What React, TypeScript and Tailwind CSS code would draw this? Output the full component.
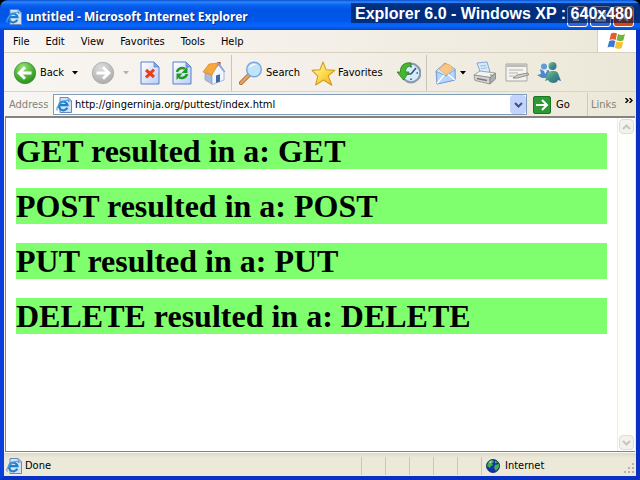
import React from "react";

const ui = "font-['DejaVu_Sans_Condensed','Liberation_Sans',Arial,sans-serif]";

function PageIcon({ size }: { size: number }) {
  return (
    <svg width={size} height={size} viewBox="0 0 16 16" className="shrink-0" aria-hidden="true">
      <path d="M4 .5h8L15.500 4v11.500H4z" fill="#d3e1f7" stroke="#6c87b8" />
      <path d="M12 .5V4h3.500z" fill="#a9c0ea" stroke="#6c87b8" strokeWidth=".6" />
      <path d="M11.200 10.800A4.300 4.300 0 1 1 11.500 8.200H4" fill="none" stroke="#1c7fc8" strokeWidth="2.200" />
      <path d="M1.500 13.500C-.5 12 2.500 6.500 8 4c3.500-1.500 5-.8 4.500 1" fill="none" stroke="#4ba3e2" strokeWidth="1.100" />
    </svg>
  );
}

function ArrowBall({ back }: { back?: boolean }) {
  return (
    <svg width="24" height="24" viewBox="0 0 24 24" className="shrink-0" aria-hidden="true">
      <defs>
        <radialGradient id={back ? "ballG" : "ballN"} cx=".4" cy=".25" r=".8">
          <stop offset="0" stopColor={back ? "#9be27c" : "#dcdcdc"} />
          <stop offset=".55" stopColor={back ? "#4fb437" : "#c2c2c2"} />
          <stop offset="1" stopColor={back ? "#238a18" : "#a8a8a8"} />
        </radialGradient>
      </defs>
      <circle cx="12" cy="12" r="10.700" fill={back ? "url(#ballG)" : "url(#ballN)"} stroke={back ? "#3f8f38" : "#aaa"} strokeWidth=".8" />
      {back ? (
        <path d="M18.500 12H7M12 6.200L6.200 12l5.800 5.800" fill="none" stroke="#fff" strokeWidth="3" />
      ) : (
        <path d="M5.500 12H17M12 6.200l5.800 5.800-5.800 5.800" fill="none" stroke="#fff" strokeWidth="3" />
      )}
    </svg>
  );
}

function Caret({ color }: { color: string }) {
  return (
    <svg width="6" height="4" viewBox="0 0 6 4" className="shrink-0" aria-hidden="true">
      <path d="M0 0h6L3 3.500z" fill={color} />
    </svg>
  );
}

function Sheet({ children }: { children: React.ReactNode }) {
  return (
    <svg width="20" height="24" viewBox="0 0 20 24" aria-hidden="true">
      <defs>
        <linearGradient id="sheet" x1="0" y1="0" x2="1" y2="1">
          <stop offset="0" stopColor="#fff" />
          <stop offset="1" stopColor="#b9cdf7" />
        </linearGradient>
      </defs>
      <path d="M1 1h13l5 5v17H1z" fill="url(#sheet)" stroke="#5b7fc4" />
      <path d="M14 1v5h5z" fill="#86a7e6" stroke="#5b7fc4" strokeWidth=".7" />
      {children}
    </svg>
  );
}

function HomeIcon() {
  return (
    <svg width="24" height="24" viewBox="0 0 24 24" aria-hidden="true">
      <path d="M15.500 1h3v7h-3z" fill="#c8321e" />
      <path d="M3 12l7 2v9l-7-4z" fill="#a9bce0" stroke="#8493b4" strokeWidth=".6" />
      <path d="M10 12l6.500-8L22 11v8l-12 4.500z" fill="#f1f5fd" stroke="#8da2cb" strokeWidth=".7" />
      <path d="M1 11L7 3l9.500-1L10 14z" fill="#f7a83c" stroke="#d98522" strokeWidth=".7" />
      <path d="M16.200 2l6.600 9" stroke="#8fa9dd" strokeWidth="1.600" />
      <path d="M14 14.500l4-1.200v7.200L14 22z" fill="#3c69ad" />
    </svg>
  );
}

function SearchIcon() {
  return (
    <svg width="24" height="24" viewBox="0 0 24 24" aria-hidden="true">
      <path d="M10 14l-8 8" stroke="#9b6131" strokeWidth="4" strokeLinecap="round" />
      <path d="M10 14l-8 8" stroke="#eba25b" strokeWidth="2.600" strokeLinecap="round" />
      <circle cx="15" cy="8.500" r="7.300" fill="#bfe4fb" stroke="#7da9d8" strokeWidth="1.500" />
      <path d="M10 8a5.500 5.500 0 0 1 8-4.500C15 4 11.500 5 10 8z" fill="#fff" />
    </svg>
  );
}

function StarIcon() {
  return (
    <svg width="25" height="25" viewBox="0 0 24 24" aria-hidden="true">
      <defs>
        <linearGradient id="star" x1="0" y1="0" x2="1" y2="1">
          <stop offset="0" stopColor="#fff9b8" />
          <stop offset=".5" stopColor="#fddc4c" />
          <stop offset="1" stopColor="#f3ac12" />
        </linearGradient>
      </defs>
      <path d="M11.500 1l3 7.500 8.500.3-6.500 5.500 3.500 9-8-5L4.500 23l2-8.500L1 9l7.500-.5z" fill="url(#star)" stroke="#d19a1f" strokeLinejoin="round" />
    </svg>
  );
}

function HistoryIcon() {
  return (
    <svg width="24" height="24" viewBox="0 0 24 24" aria-hidden="true">
      <circle cx="14" cy="12" r="9.300" fill="#d7ecfb" stroke="#8c9bae" strokeWidth="2.200" />
      <path d="M14 5v1.500M14 17.500V19M19.500 12H21M14 13l5-6M14 13h-4" stroke="#38506e" strokeWidth="1.500" />
      <path d="M14 2C7 1 3 5 3.500 11H0l6.500 8 5.500-8H8.500C8.500 7.500 10 5.500 14 5z" fill="#46b52f" stroke="#21801a" strokeWidth=".8" />
    </svg>
  );
}

function MailIcon() {
  return (
    <svg width="22" height="24" viewBox="0 0 22 24" aria-hidden="true">
      <path d="M1 10L10 2l10 6v11L2 23z" fill="#d4e6fc" stroke="#7fa0cf" />
      <path d="M4 8l6-5c4 0 7 2 8 5l-7 6z" fill="#fbc681" stroke="#dda25c" strokeWidth=".6" />
      <path d="M1.500 10.500L11 15l9-6.500V19L2 23z" fill="#b6d6fb" stroke="#7098cf" strokeWidth=".8" />
      <path d="M2 22.500L9 14M20 19l-7-5.500" stroke="#fff" strokeWidth="1.200" />
    </svg>
  );
}

function PrintIcon() {
  return (
    <svg width="24" height="24" viewBox="0 0 24 24" aria-hidden="true">
      <path d="M4 2l10-1 3 10-9 2z" fill="#d8eafd" stroke="#7fa5d6" />
      <path d="M7 5l6-.7M8 7.500l6-.7" stroke="#98bdea" />
      <path d="M1 14l6-4 15 2-5 4.500z" fill="#f4f4f4" stroke="#909090" strokeWidth=".8" />
      <path d="M1 14l16 2.500V23L2 19.500z" fill="#d4d4d4" stroke="#8c8c8c" strokeWidth=".8" />
      <path d="M17 16.500l5.500-4.500v6L17 23z" fill="#adadad" stroke="#808080" strokeWidth=".8" />
      <path d="M4 17.500l10 2" stroke="#777" strokeWidth="1.500" />
      <path d="M17 14h2" stroke="#48a63e" strokeWidth="1.200" />
    </svg>
  );
}

function EditIcon() {
  return (
    <svg width="24" height="24" viewBox="0 0 24 24" aria-hidden="true">
      <path d="M1 3h21v17H1z" fill="#f4f3ef" stroke="#a8a69e" />
      <path d="M1.500 3.500h20v2.500h-20z" fill="#bdbbb3" />
      <path d="M4 9h14M4 12h9M4 15h5" stroke="#b5b3ab" />
      <path d="M8 17l4-3 11-2 .5 2-11 3z" fill="#d3d0c6" stroke="#7d7b74" strokeWidth=".8" />
    </svg>
  );
}

function MessengerIcon() {
  return (
    <svg width="24" height="24" viewBox="0 0 24 24" aria-hidden="true">
      <defs>
        <linearGradient id="buddy" x1="0" y1="0" x2="1" y2="1">
          <stop offset="0" stopColor="#89c7a0" />
          <stop offset=".5" stopColor="#3f9080" />
          <stop offset="1" stopColor="#2a62a8" />
        </linearGradient>
      </defs>
      <circle cx="7" cy="5.500" r="3" fill="#5c9dd8" />
      <path d="M3 8l4 2 5-1 1 8H5l-5-3 4-1z" fill="#4d88c8" />
      <path d="M7 9l3 1-2 3z" fill="#fff" />
      <circle cx="15.500" cy="5" r="4" fill="url(#buddy)" />
      <path d="M11 12c2-3 8-3 10 0l3 8-3-1c-1 4-8 4-10 0l-3 1z" fill="url(#buddy)" />
    </svg>
  );
}

function WindowsFlag() {
  return (
    <svg width="20" height="18" viewBox="0 0 20 18" aria-hidden="true">
      <path d="M4 1.500C6 .2 8 .5 10 1.500L8.600 8C6.600 7 4.600 7 2.500 8z" fill="#e8592b" />
      <path d="M11 2c2.500 1.200 4.500 1.200 7 0l-1.600 6.300c-2.400 1.200-4.600 1-6.900 0z" fill="#71b53c" />
      <path d="M2.200 9c2.200-1 4.200-1 6.200 0L6.900 15.500c-2-1-4-1-6.400 0z" fill="#3d78d6" />
      <path d="M9.300 9.400c2.300 1 4.500 1.200 6.900 0L14.700 16c-2.500 1.200-4.800 1-6.900 0z" fill="#fac12e" />
    </svg>
  );
}

function Globe() {
  return (
    <svg width="14" height="14" viewBox="0 0 14 14" className="shrink-0" aria-hidden="true">
      <circle cx="7" cy="7" r="6.500" fill="#1430b8" stroke="#0c1a50" strokeWidth=".8" />
      <path d="M2 4c1-2 3-3 5-3l1 2-2 1 1 2-2 1-1 2-3-2zM9 6l4-1v3l-3 4-2-3zM9 1.500l3 2-3 1z" fill="#3fb443" />
      <path d="M3 3l2-1 1 1-2 1z" fill="#bdeeb0" />
    </svg>
  );
}

function Separator() {
  return <span className="h-9 w-px shrink-0 bg-[#c9c5b8]" />;
}

function CaptionButton({ label, close, children }: { label: string; close?: boolean; children: React.ReactNode }) {
  return (
    <button
      aria-label={label}
      className={
        "flex h-[21px] w-[21px] items-center justify-center rounded-[3px] border border-white " +
        (close ? "bg-[#d8451c]" : "bg-[#2f62dc]")
      }
    >
      <svg width="13" height="13" viewBox="0 0 13 13" fill="none" stroke="#fff" strokeWidth="2" aria-hidden="true">
        {children}
      </svg>
    </button>
  );
}

function TitleBar() {
  return (
    <header className="relative flex h-[30px] shrink-0 items-center rounded-t-lg bg-[linear-gradient(#0a4fd0_0px,#2b86fb_2px,#0a63f0_5px,#0054e3_10px,#0057ea_20px,#0866ff_26px,#0349cc_30px)] pt-[3px] pr-[6px] pl-[6px]">
      <PageIcon size={16} />
      <h1 className="ml-1 flex-1 truncate font-['Noto_Sans','Open_Sans',sans-serif] text-[12px] font-bold text-white [text-shadow:1px_1px_1px_#0a2a80]">
        untitled - Microsoft Internet Explorer
      </h1>
      <div className="flex gap-[2px]">
        <CaptionButton label="Minimize">
          <path d="M2 10h6" />
        </CaptionButton>
        <CaptionButton label="Maximize">
          <path d="M2 2.500h9v8H2z" />
        </CaptionButton>
        <CaptionButton label="Close" close>
          <path d="M2 2l9 9M11 2l-9 9" />
        </CaptionButton>
      </div>
      <div className="absolute top-[3px] right-0 h-5 w-[289px] bg-[#001238]/60 pl-1 font-['Liberation_Sans',Arial,sans-serif] text-[16px] leading-[22px] font-bold whitespace-nowrap text-white">
        Explorer 6.0 - Windows XP : 640x480
      </div>
    </header>
  );
}

const menus = ["File", "Edit", "View", "Favorites", "Tools", "Help"];

function MenuBar() {
  return (
    <nav className="flex h-[23px] shrink-0 items-stretch border-b border-[#d8d0bd]">
      <div className="flex flex-1 items-center gap-4 pt-[2px] pl-[9px]">
        {menus.map((m) => (
          <button key={m}>{m}</button>
        ))}
      </div>
      <div className="flex w-[39px] items-center justify-center border-l border-[#d8d0bd] bg-white">
        <WindowsFlag />
      </div>
    </nav>
  );
}

function ToolBar() {
  return (
    <div className="flex h-[39px] shrink-0 items-center border-b border-[#d8d4c6] pt-[2px] pl-[9px]">
      <button className="flex w-[65px] items-center gap-[3px]">
        <ArrowBall back />
        <span className="flex-1 text-left">Back</span>
        <Caret color="#000" />
      </button>
      <button aria-label="Forward" className="ml-[13px] flex w-[38px] items-center justify-between" disabled>
        <ArrowBall />
        <Caret color="#b5b2a8" />
      </button>
      <button aria-label="Stop" className="ml-[11px]">
        <Sheet>
          <path d="M6 9l8 7M14 8.500L6 16.500" stroke="#ee3c18" strokeWidth="3" />
        </Sheet>
      </button>
      <button aria-label="Refresh" className="ml-3">
        <Sheet>
          <path d="M5 11c1-4 6-5 8-3" fill="none" stroke="#249a26" strokeWidth="2.500" />
          <path d="M15.500 5.500V12H9.500z" fill="#249a26" />
          <path d="M15 13c-1 4-6 5-8 3" fill="none" stroke="#249a26" strokeWidth="2.500" />
          <path d="M4.500 19v-6.500h6z" fill="#249a26" />
        </Sheet>
      </button>
      <button aria-label="Home" className="mr-[5px] ml-[10px]">
        <HomeIcon />
      </button>
      <Separator />
      <button className="ml-[7px] flex w-[70px] items-center gap-[3px]">
        <SearchIcon />
        Search
      </button>
      <button className="ml-[2px] flex w-[84px] items-center gap-[2px]">
        <StarIcon />
        Favorites
      </button>
      <button aria-label="History" className="mr-[5px] ml-[2px]">
        <HistoryIcon />
      </button>
      <Separator />
      <button aria-label="Mail" className="ml-2 flex items-center gap-[3px]">
        <MailIcon />
        <Caret color="#000" />
      </button>
      <button aria-label="Print" className="ml-[7px]">
        <PrintIcon />
      </button>
      <button aria-label="Edit page" className="ml-2">
        <EditIcon />
      </button>
      <button aria-label="Messenger" className="ml-2">
        <MessengerIcon />
      </button>
    </div>
  );
}

function AddressBar() {
  return (
    <div className="flex h-6 shrink-0 items-center pt-px">
      <label htmlFor="address" className="w-[49px] shrink-0 pl-[5px] text-[#858279]">
        Address
      </label>
      <div className="flex h-[21px] flex-1 items-center border border-[#7f9db9] bg-white pl-[2px]">
        <PageIcon size={16} />
        <input
          id="address"
          defaultValue="http://gingerninja.org/puttest/index.html"
          className="min-w-0 flex-1 pt-px pl-[3px] outline-none"
        />
        <button aria-label="Show addresses" className="flex h-[19px] w-4 items-center justify-center rounded-sm bg-[#c3d3fb]">
          <svg width="9" height="6" viewBox="0 0 9 6" fill="none" stroke="#3d5583" strokeWidth="2" aria-hidden="true">
            <path d="M1 1l3.500 3.500L8 1" />
          </svg>
        </button>
      </div>
      <button className="ml-[6px] flex w-[54px] items-center gap-[5px]">
        <svg width="18" height="18" viewBox="0 0 18 18" aria-hidden="true">
          <rect x=".5" y=".5" width="17" height="17" rx="1.500" fill="#2b9a33" stroke="#1d7426" />
          <path d="M3 9h11M9 4l5 5-5 5" fill="none" stroke="#fff" strokeWidth="2" />
        </svg>
        Go
      </button>
      <div className="flex h-full w-[49px] items-center justify-between border-l border-[#d0ccbd] pr-[3px] pl-[3px] text-[#858279]">
        Links
        <button aria-label="More links" className="self-start pt-[5px]">
          <svg width="8" height="5" viewBox="0 0 8 5" fill="none" stroke="#000" strokeWidth="1.400" aria-hidden="true">
            <path d="M.5 0L3 2.500.5 5M4.500 0L7 2.500 4.500 5" />
          </svg>
        </button>
      </div>
    </div>
  );
}

const results = ["GET", "POST", "PUT", "DELETE"];

function ScrollButton({ up }: { up?: boolean }) {
  return (
    <button
      aria-label={up ? "Scroll up" : "Scroll down"}
      className="flex h-[15px] w-[15px] items-center justify-center rounded-sm border border-[#dedcd2] bg-[#f3f2ec]"
      disabled
    >
      <svg width="9" height="6" viewBox="0 0 9 6" fill="none" stroke="#c6c4bb" strokeWidth="2" aria-hidden="true">
        <path d={up ? "M1 5l3.500-3.500L8 5" : "M1 1l3.500 3.500L8 1"} />
      </svg>
    </button>
  );
}

function Page() {
  return (
    <div className="mx-px flex flex-1 border-t-2 border-b border-l border-[#85837b] bg-white">
      <main className="flex flex-1 flex-col gap-[19px] px-[10px] pt-[15px] font-['Liberation_Serif','Times_New_Roman',serif] text-black">
        {results.map((r) => (
          <h1 key={r} className="bg-[#7fff6e] text-[32px] leading-9 font-bold">
            {r} resulted in a: {r}
          </h1>
        ))}
      </main>
      <div className="flex w-[18px] flex-col items-center justify-between border-l border-[#eeede5] bg-[#fefefb] py-[1px]">
        <ScrollButton up />
        <ScrollButton />
      </div>
    </div>
  );
}

const panes = [0, 1, 2, 3, 4];

function StatusBar() {
  return (
    <footer className="flex h-6 shrink-0 items-center border-t border-[#fbfaf4] bg-[linear-gradient(#dedac9,#ece9d8_5px,#ece9d8)] pt-[2px] pl-[2px]">
      <PageIcon size={16} />
      <span className="flex-1 pl-[3px]">Done</span>
      {panes.map((p) => (
        <span key={p} className="h-[18px] w-6 border-l border-[#c9c5b3]" />
      ))}
      <div className="flex h-[18px] w-[155px] items-center gap-[5px] border-l border-[#c9c5b3] pl-1">
        <Globe />
        <span className="flex-1">Internet</span>
        <svg width="12" height="12" viewBox="0 0 12 12" className="self-end" fill="#b8b4a2" aria-hidden="true">
          <path d="M8 0h2v2H8zM4 4h2v2H4zM8 4h2v2H8zM0 8h2v2H0zM4 8h2v2H4zM8 8h2v2H8z" />
        </svg>
      </div>
    </footer>
  );
}

export default function App() {
  return (
    <div className={"flex min-h-screen flex-col bg-black text-[11px] leading-4 text-black " + ui}>
      <TitleBar />
      <div className="flex flex-1 flex-col border-x-4 border-b-4 border-[#0a3fdc] border-r-[#0831c4] border-b-[#0831c4] bg-[linear-gradient(90deg,#f8f6f2,#f4efe8_50%,#ece8d8)]">
        <MenuBar />
        <ToolBar />
        <AddressBar />
        <Page />
        <StatusBar />
      </div>
    </div>
  );
}
